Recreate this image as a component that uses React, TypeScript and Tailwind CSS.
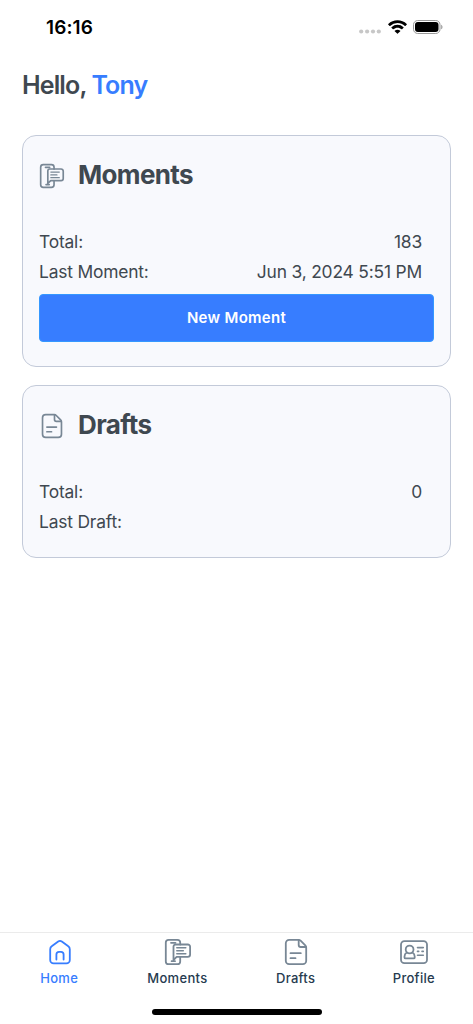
import type { ReactNode } from 'react';
import clsx from 'clsx';

type IconProps = { className?: string };

function Icon({ className, children }: IconProps & { children: ReactNode }) {
  return (
    <svg
      viewBox="0 0 28 28"
      fill="none"
      stroke="currentColor"
      strokeWidth={1.8}
      strokeLinecap="round"
      strokeLinejoin="round"
      className={clsx('shrink-0', className)}
    >
      {children}
    </svg>
  );
}

function HomeIcon({ className }: IconProps) {
  return (
    <Icon className={className}>
      <path d="M4.2 11.2c0-1.2.5-2.2 1.5-2.9l6.5-4.8c1.1-.8 2.5-.8 3.6 0l6.5 4.8c1 .7 1.5 1.7 1.5 2.9v10.8a3.4 3.4 0 0 1-3.4 3.4H7.6a3.4 3.4 0 0 1-3.4-3.4z" />
      <path d="M10.4 21.5v-5a2.6 2.6 0 0 1 2.6-2.6h2a2.6 2.6 0 0 1 2.6 2.6v5" />
    </Icon>
  );
}

function MomentsIcon({ className }: IconProps) {
  return (
    <Icon className={className}>
      <path d="M16.2 6.5V4.6a2.8 2.8 0 0 0-2.8-2.8H4.6a2.8 2.8 0 0 0-2.8 2.8v18.8a2.8 2.8 0 0 0 2.8 2.8h8.8a2.8 2.8 0 0 0 2.8-2.8V19.2" />
      <path d="M7 4.8h4.5M7.6 23.2h3.4" />
      <path d="M11.5 6.5h12.3a2.3 2.3 0 0 1 2.3 2.3v7.8a2.3 2.3 0 0 1-2.3 2.3H12.6l-3.1 3.2V8.5a2 2 0 0 1 2-2z" />
      <path d="M12.8 9.8h9M12.8 12.8h6.5M12.8 15.8h9" strokeWidth={1.5} />
    </Icon>
  );
}

function DraftsIcon({ className }: IconProps) {
  return (
    <Icon className={className}>
      <path d="M16.5 1.8H7.2a3.4 3.4 0 0 0-3.4 3.4v17.6a3.4 3.4 0 0 0 3.4 3.4h13.6a3.4 3.4 0 0 0 3.4-3.4V9.5a3 3 0 0 0-.9-2.1l-4.7-4.7a3 3 0 0 0-2.1-.9z" />
      <path d="M16.7 2v5a2 2 0 0 0 2 2h5.2M8.5 15.2h10.3M8.5 20.2h5" />
    </Icon>
  );
}

function ProfileIcon({ className }: IconProps) {
  return (
    <Icon className={className}>
      <rect x="1" y="3.2" width="26" height="22" rx="3.4" />
      <circle cx="9.6" cy="11.5" r="3.9" />
      <path d="M6.8 14.5c-1.5.8-2.3 2.2-2.3 4v.9c0 .6.4 1 1 1h8.2c.6 0 1-.4 1-1v-.9c0-1.8-.8-3.2-2.3-4" />
      <path d="M17.5 9.6h5.8M17.5 13.4h1.2M22 13.4h1.3M17.5 17.2h5.8" strokeWidth={1.6} />
    </Icon>
  );
}

function StatusBar() {
  return (
    <div className="flex h-[54px] items-center justify-between pr-[30px] pl-[46px] text-black">
      <span className="mt-0.5 text-[19px] font-semibold tracking-[0.1px]">16:16</span>
      <div className="flex items-center">
        <svg viewBox="0 0 22 5" className="mt-[9px] h-[5px] w-[22px] fill-[#c7c7c7]">
          <circle cx="2.2" cy="2.5" r="2.1" />
          <circle cx="8.1" cy="2.5" r="2.1" />
          <circle cx="14" cy="2.5" r="2.1" />
          <circle cx="19.8" cy="2.5" r="2.1" />
        </svg>
        <svg viewBox="0 0 17 12" className="ml-[7px] h-[14px] w-[19px]">
          <path d="M8.5 2.5c2.5 0 4.8.9 6.6 2.6.1.1.3.1.5 0l1.2-1.3c.2-.1.2-.4 0-.5a12 12 0 0 0-16.6 0c-.2.1-.2.4 0 .5l1.2 1.3c.2.1.4.1.5 0a9.6 9.6 0 0 1 6.6-2.6zm0 4.1c1.3 0 2.6.5 3.6 1.4.2.1.4.1.5 0l1.3-1.3c.1-.2.1-.4 0-.5a7.9 7.9 0 0 0-10.8 0c-.1.1-.1.3 0 .5l1.3 1.3c.1.1.3.1.5 0 1-.9 2.3-1.4 3.6-1.4zm2.5 2.8c.1.1.1.3 0 .4l-2.2 2.1a.4.4 0 0 1-.6 0L6 9.8c-.1-.1-.1-.3 0-.4a4 4 0 0 1 5 0z" />
        </svg>
        <svg viewBox="0 0 30 14" className="ml-[6px] h-[14px] w-[30px]">
          <rect x=".5" y=".5" width="26.5" height="13" rx="4.2" fill="none" stroke="#999" />
          <rect x="2" y="2" width="23.5" height="10" rx="2.9" />
          <path d="M28.2 4.7c1.7.7 1.7 3.9 0 4.6z" fill="#999" />
        </svg>
      </div>
    </div>
  );
}

function Row({ label, value }: { label: string; value?: string }) {
  return (
    <div className="flex h-[30px] items-center justify-between pr-3 text-[17.4px] tracking-[-0.18px]">
      <span>{label}</span>
      <span>{value}</span>
    </div>
  );
}

type CardProps = { title: string; icon: ReactNode; className: string; children: ReactNode };

function Card({ title, icon, className, children }: CardProps) {
  return (
    <section className={clsx('rounded-[14px] border border-[#c3cad9] bg-[#f8f9fd] px-4', className)}>
      <div className="flex h-[76px] items-center">
        <span className="mt-1">{icon}</span>
        <h2 className="ml-[13px] text-[26px] font-bold tracking-[-0.65px]">{title}</h2>
      </div>
      <div className="mt-[15px]">{children}</div>
    </section>
  );
}

const TABS = [
  { label: 'Home', icon: HomeIcon, active: true },
  { label: 'Moments', icon: MomentsIcon },
  { label: 'Drafts', icon: DraftsIcon },
  { label: 'Profile', icon: ProfileIcon },
];

function TabBar() {
  return (
    <nav className="flex h-[92px] flex-col items-center border-t border-[#ebebeb]">
      <div className="grid w-full grid-cols-4">
        {TABS.map(({ label, icon: TabIcon, active }) => (
          <button
            key={label}
            className={clsx('flex flex-col items-center pt-[5px]', active ? 'text-[#377dff]' : 'text-[#263b4f]')}
          >
            <TabIcon className={clsx('ml-px size-7', !active && 'text-[#788795]')} />
            <span className="mt-[2px] text-[13px] leading-5 font-medium tracking-[0.3px]">{label}</span>
          </button>
        ))}
      </div>
      <div className="mt-[21px] h-[6px] w-[170px] rounded-full bg-black" />
    </nav>
  );
}

export default function App() {
  return (
    <div className="flex h-screen flex-col bg-white font-['Inter',sans-serif] text-[#3f4850]">
      <StatusBar />
      <main className="flex-1 px-[22px]">
        <h1 className="pt-[11px] text-[25px] leading-10 font-semibold tracking-[-0.87px]">
          Hello, <span className="text-[#377dff]">Tony</span>
        </h1>
        <Card
          title="Moments"
          icon={<MomentsIcon className="size-[26px] text-[#788795]" />}
          className="mt-[30px] h-[232px]"
        >
          <Row label="Total:" value="183" />
          <Row label="Last Moment:" value="Jun 3, 2024 5:51 PM" />
          <button className="mt-[7px] h-12 w-full rounded-[4px] border border-[#3598ff] bg-[#377dff] text-[15px] font-semibold tracking-[0.3px] text-white">
            New Moment
          </button>
        </Card>
        <Card
          title="Drafts"
          icon={<DraftsIcon className="size-[26px] text-[#788795]" />}
          className="mt-[18px] h-[173px]"
        >
          <Row label="Total:" value="0" />
          <Row label="Last Draft:" />
        </Card>
      </main>
      <TabBar />
    </div>
  );
}
